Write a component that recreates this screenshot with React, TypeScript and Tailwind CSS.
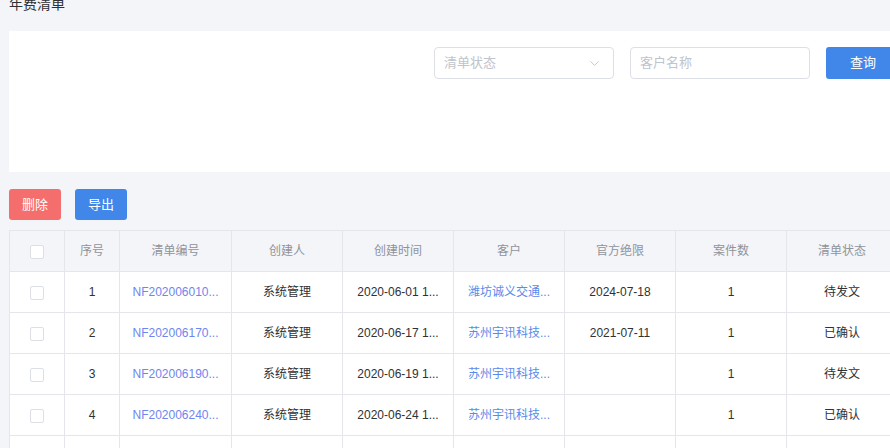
import { ChevronDown } from "lucide-react";

const rows = [
  { no: 1, code: "NF202006010...", creator: "系统管理", time: "2020-06-01 1...", client: "潍坊诚义交通...", limit: "2024-07-18", count: 1, status: "待发文" },
  { no: 2, code: "NF202006170...", creator: "系统管理", time: "2020-06-17 1...", client: "苏州宇讯科技...", limit: "2021-07-11", count: 1, status: "已确认" },
  { no: 3, code: "NF202006190...", creator: "系统管理", time: "2020-06-19 1...", client: "苏州宇讯科技...", limit: "", count: 1, status: "待发文" },
  { no: 4, code: "NF202006240...", creator: "系统管理", time: "2020-06-24 1...", client: "苏州宇讯科技...", limit: "", count: 1, status: "已确认" },
  { no: 5, code: "", creator: "", time: "", client: "", limit: "", count: "", status: "" },
];

const headers = ["序号", "清单编号", "创建人", "创建时间", "客户", "官方绝限", "案件数", "清单状态"];

function Checkbox() {
  return <span className="inline-block w-[14px] h-[14px] rounded-[2px] border border-[#dcdfe6] bg-white align-middle" />;
}

export default function App() {
  return (
    <div
      className="w-[890px] h-[448px] overflow-hidden bg-[#f4f5f9] pl-[9px]"
      style={{ fontFamily: "'Liberation Sans', 'Noto Sans CJK SC', sans-serif" }}
    >
      <div className="w-[1000px]">
        {/* 标题 */}
        <h1 className="-mt-[6px] h-[37px] text-[14px] leading-[20px] text-[#303133] font-normal">年费清单</h1>

        {/* 筛选 */}
        <div className="bg-white h-[141px] pt-[16px] pl-[425px] flex items-start gap-4">
          <div className="w-[180px] h-[32px] border border-[#dcdfe6] rounded-[4px] flex items-center justify-between px-[9px]">
            <span className="text-[13px] text-[#c0c4cc]">清单状态</span>
            <ChevronDown size={15} strokeWidth={1.5} className="text-[#c0c4cc] mr-[2px]" />
          </div>
          <div className="w-[180px] h-[32px] border border-[#dcdfe6] rounded-[4px] flex items-center px-[9px]">
            <span className="text-[13px] text-[#c0c4cc]">客户名称</span>
          </div>
          <button className="w-[74px] h-[32px] rounded-[3px] bg-[#4187e9] text-white text-[13px]">查询</button>
        </div>

        {/* 操作按钮 */}
        <div className="flex gap-[14px] mt-[17px] mb-[10px]">
          <button className="w-[52px] h-[31px] rounded-[3px] bg-[#f46e6e] text-white text-[13px]">删除</button>
          <button className="w-[52px] h-[31px] rounded-[3px] bg-[#4187e9] text-white text-[13px]">导出</button>
        </div>

        {/* 表格 */}
        <table className="table-fixed border-collapse text-[12px] w-[1000px]">
          <colgroup>
            <col className="w-[55px]" />
            <col className="w-[55px]" />
            <col className="w-[112px]" />
            <col className="w-[111px]" />
            <col className="w-[111px]" />
            <col className="w-[111px]" />
            <col className="w-[111px]" />
            <col className="w-[111px]" />
            <col className="w-[111px]" />
            <col />
          </colgroup>
          <thead>
            <tr className="h-[41px] bg-[#f4f5f9] text-[#909399]">
              <th className="border border-[#e4e6eb] font-normal"><Checkbox /></th>
              {headers.map((h) => (
                <th key={h} className="border border-[#e4e6eb] font-normal">{h}</th>
              ))}
              <th className="border border-[#e4e6eb] font-normal"></th>
            </tr>
          </thead>
          <tbody className="bg-white text-[#303133]">
            {rows.map((r) => (
              <tr key={r.no} className="h-[41px]">
                <td className="border border-[#e4e6eb] text-center"><Checkbox /></td>
                <td className="border border-[#e4e6eb] text-center">{r.code ? r.no : ""}</td>
                <td className="border border-[#e4e6eb] text-center text-[#6e86ee]">{r.code}</td>
                <td className="border border-[#e4e6eb] text-center">{r.creator}</td>
                <td className="border border-[#e4e6eb] text-center">{r.time}</td>
                <td className="border border-[#e4e6eb] text-center text-[#5a8aea]">{r.client}</td>
                <td className="border border-[#e4e6eb] text-center">{r.limit}</td>
                <td className="border border-[#e4e6eb] text-center">{r.count}</td>
                <td className="border border-[#e4e6eb] text-center">{r.status}</td>
                <td className="border border-[#e4e6eb]"></td>
              </tr>
            ))}
          </tbody>
        </table>
      </div>
    </div>
  );
}
